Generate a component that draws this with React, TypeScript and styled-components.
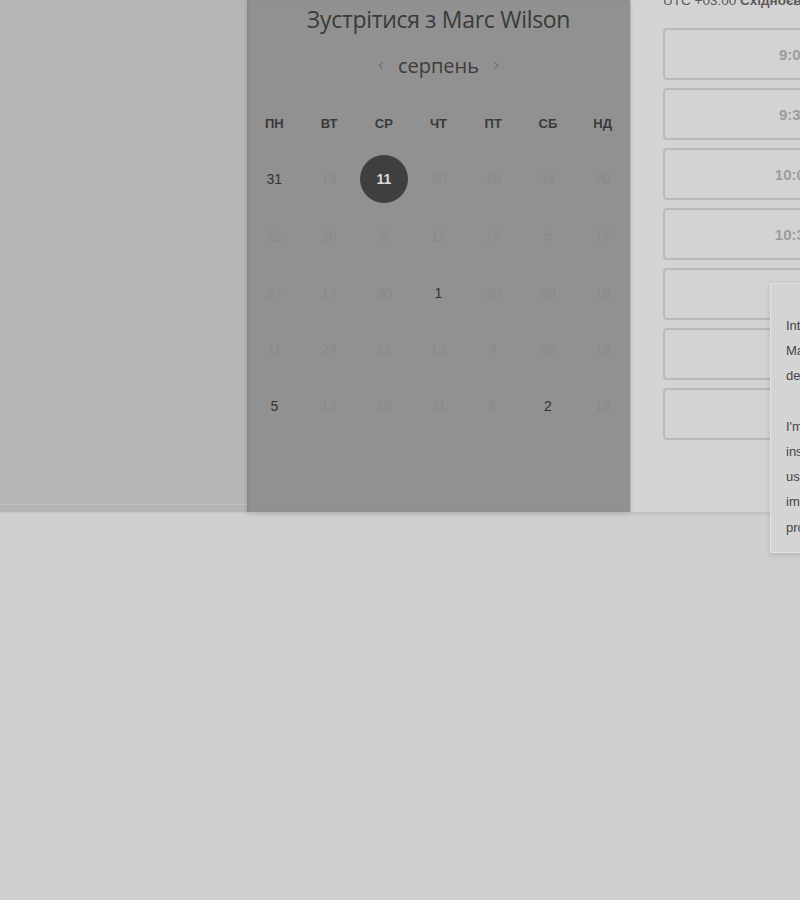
import React from "react";
import styled, { createGlobalStyle } from "styled-components";

const Global = createGlobalStyle`
  html, body { margin: 0; padding: 0; background: #cfcfcf; overflow: hidden; }
  body { font-family: "Liberation Sans", Arial, sans-serif; }
  #root { width: 800px; height: 900px; }
`;

const Page = styled.div`
  display: flex;
  align-items: flex-start;
  width: 800px;
  overflow-x: clip;
`;

const LeftPane = styled.div`
  width: 247px;
  flex: none;
  height: 513px;
  background: #b5b5b5;
  border-bottom: 1px solid #c6c6c6;
  box-sizing: border-box;
  position: relative;
  &::after {
    content: "";
    position: absolute;
    left: 0; right: 0; top: 504px; height: 1px;
    background: #c2c2c2;
  }
`;

const CenterPane = styled.div`
  width: 383px;
  flex: none;
  height: 512px;
  background: #919191;
  box-shadow: inset 3px 0 3px -1px #868686, 0 2px 4px rgba(0,0,0,0.15);
  display: flex;
  flex-direction: column;
  align-items: center;
  position: relative;
  z-index: 1;
`;

const Title = styled.h1`
  margin: 4px 0 0;
  font-family: "Open Sans", sans-serif;
  font-weight: 400;
  font-size: 23px;
  line-height: 30px;
  color: #3a3a3a;
  letter-spacing: -0.3px;
`;

const MonthRow = styled.div`
  display: flex;
  align-items: center;
  gap: 14px;
  margin-top: 17px;
  height: 28px;
`;

const Arrow = styled.span`
  font-family: "DejaVu Sans", sans-serif;
  font-size: 16px;
  color: #6f6f6f;
  line-height: 1;
`;

const Month = styled.span`
  font-family: "Open Sans", sans-serif;
  font-size: 20px;
  color: #3c3c3c;
`;

const Grid = styled.div`
  display: grid;
  grid-template-columns: repeat(7, 1fr);
  grid-template-rows: 40px;
  grid-auto-rows: 56.7px;
  width: 100%;
  margin-top: 32px;
`;

const WeekDay = styled.div`
  align-self: start;
  text-align: center;
  font-family: "Liberation Sans", Arial, sans-serif;
  font-weight: 700;
  font-size: 13px;
  color: #3a3a3a;
  height: 26px;
  line-height: 26px;
`;

const DayCell = styled.div`
  display: flex;
  align-items: center;
  justify-content: center;
`;

const Day = styled.span<{ $state: "off" | "on" | "sel" }>`
  font-family: "Liberation Sans", Arial, sans-serif;
  font-size: 14px;
  width: 48px;
  height: 48px;
  border-radius: 50%;
  display: flex;
  align-items: center;
  justify-content: center;
  color: ${(p) => (p.$state === "off" ? "#8a8a8a" : p.$state === "sel" ? "#dcdcdc" : "#333")};
  background: ${(p) => (p.$state === "sel" ? "#3f3f3f" : "transparent")};
  font-weight: ${(p) => (p.$state === "sel" ? 700 : 400)};
`;

const RightPane = styled.div`
  flex: 1;
  height: 512px;
  background: #d3d3d3;
  border-left: 1px solid #c2c2c2;
  box-sizing: border-box;
  position: relative;
  padding: 0 0 0 32px;
  box-shadow: 0 2px 3px rgba(0,0,0,0.08);
`;

const Zone = styled.div`
  margin-top: -6px;
  font-size: 13.5px;
  color: #5a5a5a;
  white-space: nowrap;
  height: 14px;
  line-height: 14px;
  b { font-weight: 700; }
`;

const Slots = styled.div`
  display: flex;
  flex-direction: column;
  gap: 8px;
  margin-top: 20px;
`;

const Slot = styled.div`
  width: 262px;
  height: 52px;
  box-sizing: border-box;
  border: 2px solid #b9b9b9;
  border-radius: 4px;
  display: flex;
  align-items: center;
  justify-content: center;
  font-size: 15px;
  font-weight: 700;
  color: #9c9c9c;
  flex: none;
`;

const Popover = styled.div`
  position: absolute;
  left: 139px;
  top: 283px;
  width: 250px;
  height: 270px;
  box-sizing: border-box;
  background: #d4d4d4;
  border: 1px solid #e2e2e2;
  box-shadow: 0 2px 6px rgba(0,0,0,0.12);
  padding: 29px 0 0 15px;
  z-index: 2;
`;

const PopLine = styled.div`
  font-family: "Liberation Sans", Arial, sans-serif;
  font-size: 13px;
  line-height: 25.2px;
  height: 25.2px;
  color: #454545;
  white-space: nowrap;
`;

const weekdays = ["ПН", "ВТ", "СР", "ЧТ", "ПТ", "СБ", "НД"];
const days: [number, "off" | "on" | "sel"][] = [
  [31, "on"], [15, "off"], [11, "sel"], [30, "off"], [19, "off"], [14, "off"], [20, "off"],
  [22, "off"], [26, "off"], [2, "off"], [12, "off"], [14, "off"], [5, "off"], [17, "off"],
  [27, "off"], [17, "off"], [30, "off"], [1, "on"], [20, "off"], [20, "off"], [16, "off"],
  [11, "off"], [24, "off"], [21, "off"], [13, "off"], [4, "off"], [28, "off"], [12, "off"],
  [5, "on"], [14, "off"], [16, "off"], [21, "off"], [6, "off"], [2, "on"], [12, "off"],
];
const slots = ["9:00", "9:30", "10:00", "10:30", "11:00", "11:30", "12:00"];
const pop = [
  "Introductory call with",
  "Marc Wilson to discuss",
  "design goals.",
  "",
  "I'm a designer who brings",
  "insight from research and",
  "user testing to help",
  "improve your digital",
  "products.",
];

export default function App() {
  return (
    <>
      <Global />
      <Page>
        <LeftPane />
        <CenterPane>
          <Title>Зустрітися з Marc Wilson</Title>
          <MonthRow>
            <Arrow>‹</Arrow>
            <Month>серпень</Month>
            <Arrow>›</Arrow>
          </MonthRow>
          <Grid>
            {weekdays.map((w) => (
              <WeekDay key={w}>{w}</WeekDay>
            ))}
            {days.map(([d, s], i) => (
              <DayCell key={i}>
                <Day $state={s}>{d}</Day>
              </DayCell>
            ))}
          </Grid>
        </CenterPane>
        <RightPane>
          <Zone>
            UTC +03:00 <b>Східноєвропейський час</b>
          </Zone>
          <Slots>
            {slots.map((t) => (
              <Slot key={t}>{t}</Slot>
            ))}
          </Slots>
          <Popover>
            {pop.map((l, i) => (
              <PopLine key={i}>{l}</PopLine>
            ))}
          </Popover>
        </RightPane>
      </Page>
    </>
  );
}
